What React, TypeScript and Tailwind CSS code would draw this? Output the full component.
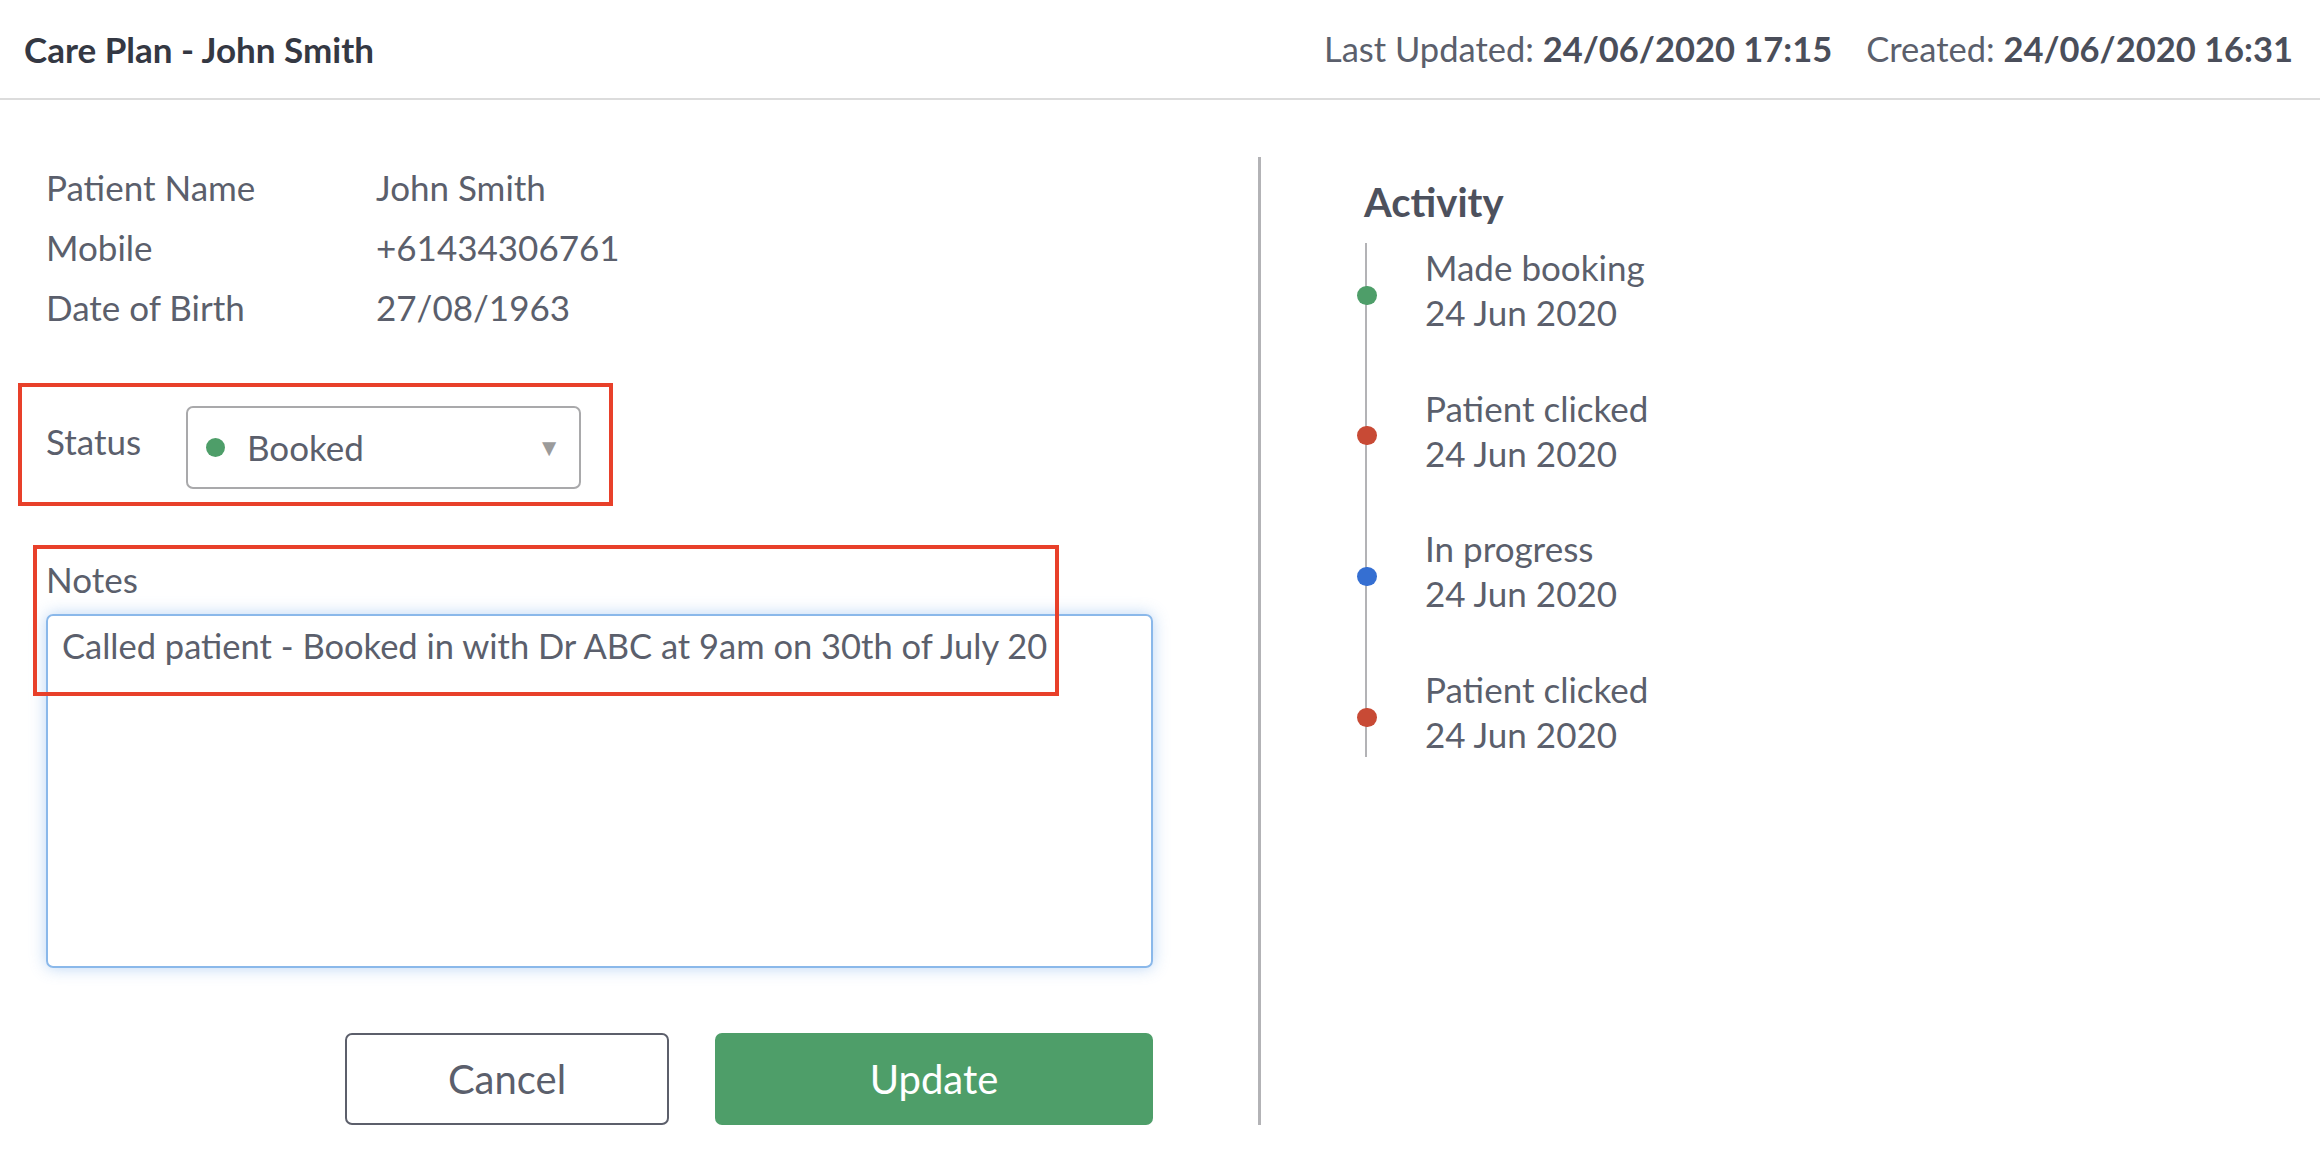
import React from "react";

// --- DATOS ---
const paciente = [
  { label: "Patient Name", value: "John Smith" },
  { label: "Mobile", value: "+61434306761" },
  { label: "Date of Birth", value: "27/08/1963" },
];

const actividad = [
  { title: "Made booking", date: "24 Jun 2020", color: "bg-[#4e9e69]" },
  { title: "Patient clicked", date: "24 Jun 2020", color: "bg-[#c84a35]" },
  { title: "In progress", date: "24 Jun 2020", color: "bg-[#356fd2]" },
  { title: "Patient clicked", date: "24 Jun 2020", color: "bg-[#c84a35]" },
];

export default function App() {
  return (
    <div className="min-h-screen bg-white font-['Lato',sans-serif] text-[#5b5f6c]">
      {/* --- HEADER --- */}
      <header className="flex h-[100px] items-center justify-between border-b-2 border-[#dcdcdc] pl-[24px] pr-[27px]">
        <h1 className="text-[35px] font-bold text-[#343843]">Care Plan - John Smith</h1>
        <div className="flex gap-[34px] text-[34.5px]">
          <span>
            Last Updated: <b className="font-bold text-[#4a4e5a]">24/06/2020 17:15</b>
          </span>
          <span>
            Created: <b className="font-bold text-[#4a4e5a]">24/06/2020 16:31</b>
          </span>
        </div>
      </header>

      <div className="flex pt-[57px]">
        {/* --- COLUMNA IZQUIERDA --- */}
        <div className="w-[1258px] pl-[18px] pr-[105px]">
          <table className="ml-[28px] text-[35px]">
            <tbody>
              {paciente.map((p) => (
                <tr key={p.label} className="h-[60px]">
                  <td className="w-[330px] p-0">{p.label}</td>
                  <td className="p-0">{p.value}</td>
                </tr>
              ))}
            </tbody>
          </table>

          <div className="mt-[46px] flex h-[123px] w-[595px] items-center border-4 border-[#e8402a] pl-[24px]">
            <span className="-mt-[6px] w-[140px] text-[35px]">Status</span>
            <div className="mt-[5px] flex h-[83px] w-[395px] items-center rounded-[7px] border-2 border-[#a9a9ab] pl-[18px] pr-[18px]">
              <span className="h-[19px] w-[19px] rounded-full bg-[#4e9e69]" />
              <span className="ml-[22px] flex-1 text-[35px]">Booked</span>
              <span className="text-[24px] text-[#9b9b9b]">▼</span>
            </div>
          </div>

          <div className="relative mt-[50px] pl-[28px]">
            <div className="h-[46px] text-[35px] leading-[46px]">Notes</div>
            <div className="mt-[12px] h-[354px] rounded-[7px] border-2 border-[#8ab8ea] pl-[14px] pt-[8px] text-[34.5px] leading-[44px] shadow-[0_0_16px_rgba(100,160,230,0.45)]">
              Called patient - Booked in with Dr ABC at 9am on 30th of July 20
            </div>
            <div className="pointer-events-none absolute left-[15px] top-[-11px] h-[151px] w-[1026px] border-4 border-[#e8402a]" />

            <div className="mt-[65px] flex justify-end gap-[46px]">
              <button className="h-[92px] w-[324px] rounded-[7px] border-2 border-[#5c5f6b] bg-white text-[40px] text-[#5b5f6c]">
                Cancel
              </button>
              <button className="h-[92px] w-[438px] rounded-[7px] bg-[#4e9e69] text-[40px] text-white">
                Update
              </button>
            </div>
          </div>
        </div>

        {/* --- DIVISOR --- */}
        <div className="w-[3px] bg-[#b3b3b6]" />

        {/* --- ACTIVIDAD --- */}
        <div className="pl-[103px] pt-[22px]">
          <h2 className="text-[40px] font-bold leading-[46px] text-[#4d515d]">Activity</h2>
          <div className="relative mt-[20px] flex flex-col gap-[50px] text-[35px] leading-[45.3px]">
            <div className="absolute bottom-0 left-[1px] top-[-2px] w-[2px] bg-[#b3b3b6]" />
            {actividad.map((a, i) => (
              <div key={i} className="relative flex items-center">
                <span className={`relative z-10 -ml-[7px] mt-[10px] h-[19px] w-[20px] rounded-full ${a.color}`} />
                <div className="ml-[48px]">
                  <div>{a.title}</div>
                  <div>{a.date}</div>
                </div>
              </div>
            ))}
          </div>
        </div>
      </div>
    </div>
  );
}
